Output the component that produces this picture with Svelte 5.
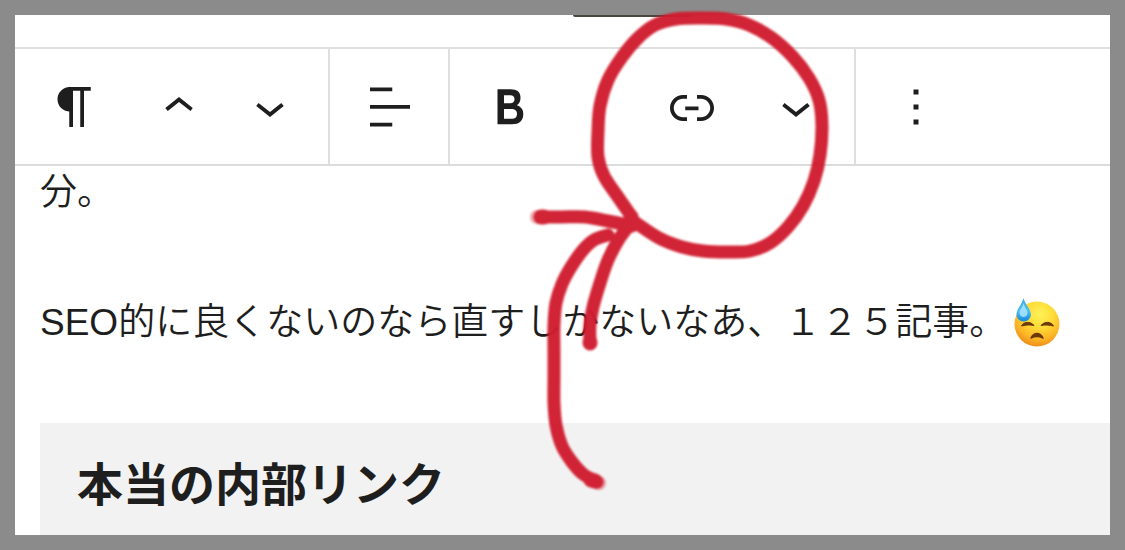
<script lang="ts">
  type Tool = { label: string; path: string; spaced?: boolean; wide?: boolean };
  type Point = [number, number];

  const chevronDown = 'M17.5 11.6L12 16l-5.5-4.4.9-1.2L12 14l4.5-3.6 1 1.2z';

  const groups: Tool[][] = [
    [
      {
        label: '段落',
        path: 'M18.3 4H9.9v-.1l-.9.2c-2.3.4-4 2.4-4 4.8s1.7 4.4 4 4.8l.7.1V20h1.5V5.5h2.9V20h1.5V5.5h2.7V4z',
      },
      { label: '上に移動', path: 'M6.5 12.4L12 8l5.5 4.4-.9 1.2L12 10l-4.5 3.6-1-1.2z', spaced: true },
      { label: '下に移動', path: chevronDown },
    ],
    [{ label: '配置', path: 'M4 19.8h8.9v-1.5H4v1.5zm8.9-15.6H4v1.5h8.9V4.2zm-8.9 7v1.5h16v-1.5H4z' }],
    [
      {
        label: '太字',
        path: 'M14.7 11.3c1-.6 1.5-1.6 1.5-3 0-2.3-1.3-3.4-4-3.4H7v14h5.8c1.4 0 2.5-.3 3.3-1 .8-.7 1.2-1.7 1.2-2.9.1-1.9-.8-3.1-2.6-3.7zm-5.1-4h2.3c.6 0 1.1.1 1.4.4.3.3.5.7.5 1.2s-.2 1-.5 1.2c-.3.3-.8.4-1.4.4H9.6V7.3zm4.6 9c-.4.3-1 .4-1.7.4H9.6v-3.9h2.9c.7 0 1.3.2 1.7.5.4.3.6.8.6 1.4s-.2 1.2-.6 1.6z',
      },
      {
        label: 'リンク',
        path: 'M15.6 7.2H14v1.5h1.6c2 0 3.7 1.7 3.7 3.7s-1.7 3.7-3.7 3.7H14v1.5h1.6c2.8 0 5.2-2.3 5.2-5.2 0-2.9-2.3-5.2-5.2-5.2zM4.7 12.4c0-2 1.7-3.7 3.7-3.7H10V7.2H8.4c-2.9 0-5.2 2.3-5.2 5.2 0 2.9 2.3 5.2 5.2 5.2H10v-1.5H8.4c-2 0-3.7-1.7-3.7-3.7zm4.6.9h5.3v-1.5H9.3v1.5z',
        wide: true,
      },
      { label: 'さらに表示', path: chevronDown, spaced: true },
    ],
    [{ label: 'オプション', path: 'M13 19h-2v-2h2v2zm0-6h-2v-2h2v2zm0-6h-2V5h2v2z' }],
  ];

  const strokes: Point[][] = [
    // circle
    [
      [632, 217], [618, 197], [604, 176], [598, 157], [598, 132], [600, 106], [608, 80], [622, 57],
      [638, 38], [655, 25], [676, 19], [700, 18], [726, 19], [749, 25], [772, 38], [793, 57],
      [809, 78], [819, 100], [822, 125], [820, 155], [814, 181], [803, 206], [788, 227], [770, 243],
      [750, 251], [727, 252], [703, 251], [682, 247], [659, 238], [636, 223],
    ],
    // arrow head
    [[541, 217], [562, 217], [585, 217], [608, 221], [632, 226]],
    [[632, 222], [619, 239], [608, 260], [600, 283], [593, 307], [590, 325], [590, 343]],
    // arrow shaft
    [
      [608, 235], [594, 240], [583, 250], [571, 267], [562, 284], [556, 303], [554, 325], [554, 352],
      [554, 379], [554, 403], [556, 425], [562, 446], [572, 462], [583, 474], [597, 482],
    ],
  ];

  // Catmull-Rom curve through the recorded points
  function smooth(points: Point[]) {
    let d = `M${points[0]}`;
    for (let i = 0; i < points.length - 1; i++) {
      const p0 = points[i - 1] ?? points[i];
      const p1 = points[i];
      const p2 = points[i + 1];
      const p3 = points[i + 2] ?? p2;
      d += `C${p1[0] + (p2[0] - p0[0]) / 6} ${p1[1] + (p2[1] - p0[1]) / 6}`;
      d += ` ${p2[0] - (p3[0] - p1[0]) / 6} ${p2[1] - (p3[1] - p1[1]) / 6} ${p2[0]} ${p2[1]}`;
    }
    return d;
  }
</script>

<main>
  <div class="editor">
    <div class="strip"><span class="tab"></span></div>

    <div class="toolbar" role="toolbar" aria-label="ブロックツール">
      {#each groups as group}
        <div class="group">
          {#each group as tool}
            <button type="button" aria-label={tool.label} class:spaced={tool.spaced} class:wide={tool.wide}>
              <svg viewBox="0 0 24 24" aria-hidden="true"><path d={tool.path} /></svg>
            </button>
          {/each}
        </div>
      {/each}
    </div>

    <article>
      <p>分。</p>
      <p>
        SEO的に良くないのなら直すしかないなあ、１２５記事。<svg class="emoji" viewBox="0 0 48 50" role="img" aria-label="冷や汗">
          <defs>
            <radialGradient id="face" cx="0.56" cy="0.28" r="0.74">
              <stop offset="0" stop-color="#fff158" />
              <stop offset="0.4" stop-color="#ffdc38" />
              <stop offset="0.75" stop-color="#fcb526" />
              <stop offset="1" stop-color="#ec8a16" />
            </radialGradient>
            <linearGradient id="drop" x1="0" y1="0" x2="0" y2="1">
              <stop offset="0" stop-color="#3fa9e0" />
              <stop offset="0.55" stop-color="#4cbdf5" />
              <stop offset="1" stop-color="#1487dc" />
            </linearGradient>
          </defs>
          <circle cx="23" cy="26" r="22.5" fill="url(#face)" />
          <path d="M9.5 0C8 6.500 2.500 11 2.500 16.500a7.200 7 0 0 0 14.400 0C16.900 11 11 6.500 9.500 0z" fill="url(#drop)" />
          <path d="M9.5 5c-1 4-4 7-4 10 0 2.500 2 4 4 4s4-1.500 4-4c0-3-3-6-4-10z" fill="#b9ecff" opacity="0.75" />
          <path d="M7.500 28c2-4.500 9-5 12.500-.5-4.500-1-8-.5-12.500.5zM27 27.500c3.500-4.500 10.500-4 12.500.5-4.500-1-8-1.500-12.500-.5z" fill="#6b3a08" stroke="#6b3a08" stroke-linejoin="round" />
          <path d="M17 40c3-6 9-6 12 0-4-2-8-2-12 0z" fill="#6b3a08" stroke="#6b3a08" stroke-width="1.5" stroke-linejoin="round" />
        </svg>
      </p>
      <h2>本当の内部リンク</h2>
    </article>
  </div>

  <!-- hand-drawn marker: circle round the link button, arrow pointing at it -->
  <svg class="marker" width="1125" height="550" viewBox="0 0 1125 550" aria-hidden="true">
    {#each strokes as points}
      <path d={smooth(points)} />
    {/each}
    <path class="tip" d="M541 217h3M590 342v1M591 480l4 1M631 217v5" />
    <path class="fade" d="M537 217h4M596 482l3 1" />
  </svg>
</main>

<style>
  :global(body) {
    margin: 0;
  }

  main {
    position: relative;
    display: flex;
    box-sizing: border-box;
    min-height: 100vh;
    padding: 15px;
    background: #8b8b8b;
    color: #1e1e1e;
    font-family: 'Liberation Sans', 'Noto Sans CJK JP', sans-serif;
    overflow: hidden;
  }

  .editor {
    display: flex;
    flex: 1;
    flex-direction: column;
    min-width: 0;
    background: #fff;
  }

  .strip {
    height: 32px;
  }

  .tab {
    display: block;
    width: 120px;
    height: 2px;
    margin-left: 558px;
    border-radius: 0 0 0 2px;
    background: #49453f;
  }

  .toolbar {
    display: flex;
    height: 115px;
    border-top: 2px solid #e0e0e0;
    border-bottom: 2px solid #dcdcdc;
  }

  .group {
    display: flex;
    padding: 0 13px 0 14px;
    border-right: 2px solid #dedede;
  }

  .group:last-child {
    border-right: 0;
  }

  button {
    display: flex;
    align-items: center;
    justify-content: center;
    width: 91px;
    padding: 0;
    border: 0;
    background: none;
    cursor: pointer;
  }

  button svg {
    width: 60px;
    height: 60px;
    fill: #1e1e1e;
  }

  .spaced {
    margin-left: 13px;
  }

  .wide {
    margin-left: 91px;
  }

  article {
    display: flex;
    flex: 1;
    flex-direction: column;
    padding: 2px 0 0 25px;
  }

  p {
    margin: 0 0 80px;
    font-size: 37px;
    font-weight: 350;
    line-height: 50px;
    white-space: nowrap;
  }

  p + p {
    margin-bottom: 75px;
  }

  .emoji {
    width: 48px;
    height: 50px;
    margin-left: 8px;
    vertical-align: top;
  }

  h2 {
    flex: 1;
    margin: 0;
    padding: 32px 37px 19px;
    background: #f2f2f2;
    font-size: 46px;
    font-weight: 700;
    line-height: 60px;
  }

  .marker {
    position: absolute;
    top: 0;
    left: 0;
    fill: none;
    stroke: #d01d30;
    stroke-width: 13;
    stroke-linecap: round;
    stroke-linejoin: round;
    opacity: 0.97;
    filter: blur(1px);
    pointer-events: none;
  }

  .tip {
    stroke-width: 15;
  }

  .fade {
    stroke-width: 14;
    opacity: 0.4;
  }
</style>
